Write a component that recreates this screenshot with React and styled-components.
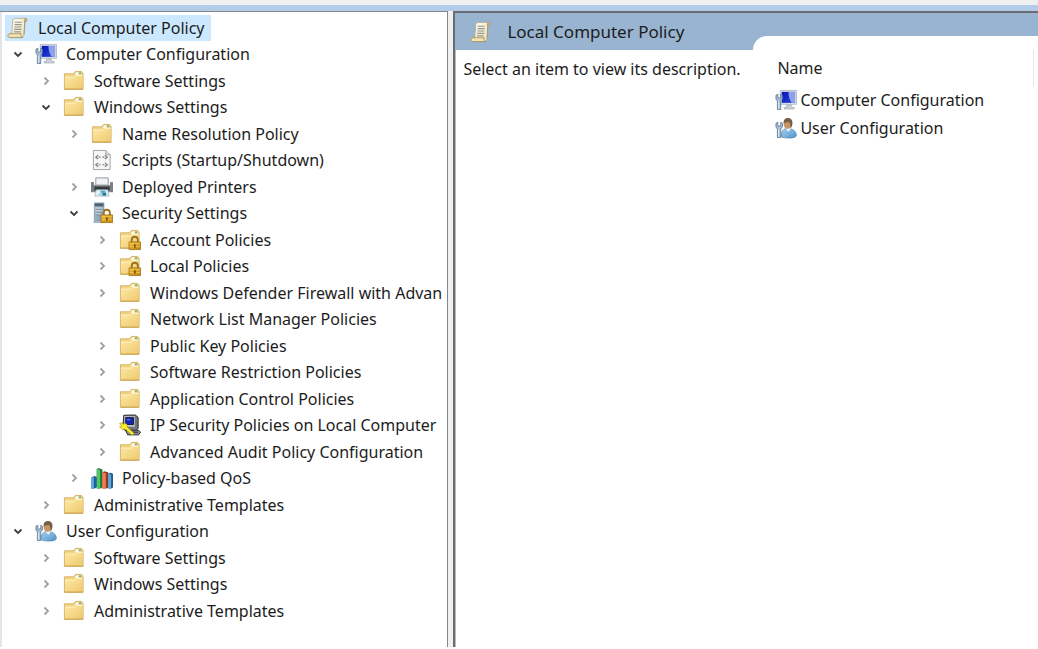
import React, { useState } from "react";
import styled, { createGlobalStyle } from "styled-components";

const GlobalStyle = createGlobalStyle`
  * {
    box-sizing: border-box;
  }

  body {
    margin: 0;
    background: #fff;
    color: #1c1c1c;
    font-family: "Noto Sans", "Open Sans", sans-serif;
    font-size: 16px;
  }

  button {
    font: inherit;
    color: inherit;
    background: none;
    border: 0;
    padding: 0;
    cursor: default;
  }
`;

const Window = styled.div`
  display: flex;
  flex-direction: column;
  height: 100vh;
  padding-bottom: 2px;
  overflow: hidden;
`;

const TopStrip = styled.div`
  flex: none;
  height: 11px;
  background: #b3cde8;
  border-top: 5px solid #f0f0f1;
`;

const Panes = styled.div`
  flex: 1;
  display: flex;
  min-height: 0;
  background: #f0f0f0;
`;

const TreePane = styled.nav`
  flex: 0 0 43.2%;
  overflow: hidden;
  background: #fff;
  border: solid #82878c;
  border-width: 1px 1px 0 0;
  box-shadow: inset 2px 0 0 #e3e5e8;
`;

const DetailPane = styled.main`
  flex: 1;
  min-width: 0;
  margin-left: 5px;
  background: #fff;
  border: solid #696d72;
  border-width: 2px 0 0 2px;
  box-shadow: inset 1px 0 0 #b8bbbf;
`;

const Tree = styled.ul`
  list-style: none;
  margin: 0;
  padding: 2px 0 0;
`;

const TreeRow = styled.li`
  display: flex;
  align-items: center;
  height: 26px;
  padding-left: ${({ $level }) => ($level ? 11 + 28 * ($level - 1) : 5)}px;

  &:nth-child(odd) {
    height: 27px;
  }
`;

const Twisty = styled.button`
  display: flex;
  flex: none;
  align-items: center;
  justify-content: center;
  width: 14px;
  height: 20px;
  margin-right: 8px;
  color: ${({ $open }) => ($open ? "#404040" : "#a0a0a0")};
`;

const TwistySpace = styled.span`
  flex: none;
  width: 22px;
`;

const TreeLabel = styled.button`
  display: flex;
  flex: none;
  align-items: center;
  gap: 9px;
  height: 26px;
  padding: 0 6px 0 2px;
  line-height: 26px;
  white-space: nowrap;
  background: ${({ $selected }) => ($selected ? "#cce8ff" : "none")};
`;

const Icon = styled.svg`
  display: block;
  flex: none;
  width: 22px;
  height: 22px;
`;

const ChevronIcon = styled.svg`
  display: block;
  width: 12px;
  height: 12px;
  fill: none;
  stroke: currentColor;
  stroke-width: 1.8;
`;

const TitleBar = styled.header`
  display: flex;
  align-items: center;
  gap: 15px;
  height: 37px;
  padding-left: 15px;
  background: #99b4d1;
`;

const Title = styled.h1`
  margin: 0;
  font-size: 17px;
  font-weight: 400;
`;

const DetailBody = styled.div`
  display: flex;
`;

const Description = styled.p`
  flex: 0 0 298px;
  margin: 0;
  padding: 7px 0 0 8px;
  line-height: 24px;
  white-space: nowrap;
`;

const Results = styled.div`
  flex: 1;
  margin-top: -14px;
  padding: 14px 4px 0 22px;
  background: #fff;
  border-top-left-radius: 14px;
`;

const ResultTable = styled.table`
  width: 100%;
  border-collapse: collapse;

  th {
    height: 36px;
    padding: 0 0 0 2px;
    font-weight: 400;
    text-align: left;
    border-right: 1px solid #e8e8e8;
  }

  td {
    height: 28px;
    padding: 0;
  }
`;

const ResultItem = styled.button`
  display: flex;
  align-items: center;
  gap: 3px;
`;

const Chevron = ({ open }) => (
  <ChevronIcon viewBox="0 0 12 12" aria-hidden="true">
    <path d={open ? "M2.5 4.5 6 8 9.5 4.5" : "M4.5 2.5 8 6 4.5 9.5"} />
  </ChevronIcon>
);

const FolderShape = () => (
  <>
    <path d="M1.500 19.500V3.500h9.500l2-2.500h6.500l1.500 2v16.500z" fill="#f2d686" stroke="#d0ab58" strokeWidth=".9" />
    <path d="M13.500 2h5.500v2.500h-6.500z" fill="#fffdf0" />
    <path d="M16.500 2H19v2h-2.500z" fill="#79a87c" />
    <path d="M2 7h10.500l1.500-1.800h6.500V19H2z" fill="url(#folderFace)" />
    <path d="M2 7h10.500l1.500-1.800h6.500" fill="none" stroke="#fff3c4" />
    <path d="M1.500 19.500h19.500" stroke="#c69c43" />
  </>
);

const LockShape = () => (
  <>
    <path d="M13.300 14v-3.200a3.200 3.200 0 0 1 6.400 0V14" fill="none" stroke="#9b7320" strokeWidth="1.900" />
    <path d="M10.500 13h12v8h-12z" fill="url(#lockFace)" stroke="#9a6b10" strokeWidth=".8" />
    <path d="M11 15h11M11 18h11" stroke="#f7cd5a" strokeWidth=".8" />
    <path d="M15.800 15.500h1.500v3.500h-1.500z" fill="#65450a" />
  </>
);

const WrenchShape = () => (
  <>
    <path d="M1 6v4l1.500 2v9H6v-9l1.700-2V6L6 5v4H3V5z" fill="#a7c0d6" stroke="#54718d" strokeWidth=".8" />
    <path d="M3.800 12.500V20" stroke="#e4f0fa" />
  </>
);

const drawings = {
  scroll: (
    <>
      <path d="M6 2.500 8 1h12.500L19 3l-1 14.500-1.500 3.500H2.500L1 19l1.500-2H5z" fill="url(#paper)" stroke="#b5a67d" strokeWidth=".8" />
      <path d="M18 3c0-1.300.700-2 1.500-2s1.500.800 1.500 1.800L20 4.500h-2z" fill="#cdb988" stroke="#958458" strokeWidth=".6" />
      <path d="M1 18.800c0-1 1-1.800 2-1.800h12c-.8.700-.6 3 1.500 4H3c-1.200 0-2-1-2-2.200z" fill="#f3e3b4" stroke="#9a8654" strokeWidth=".8" />
      <path d="M18.500 4.500 17.800 17.500" stroke="#a3946a" strokeWidth=".9" />
      <path d="M8 5h7.500M8 7.500h7.300M7.700 10H15M7.500 12.500H15M7.300 15h7" stroke="#98968d" strokeWidth="1.200" />
    </>
  ),
  computer: (
    <>
      <path d="M5.500 1h17v14.500h-17z" fill="#dde3ea" stroke="#a5afba" strokeWidth=".8" />
      <path d="M7 2.500h14v11.500H7z" fill="url(#screen)" />
      <path d="M14 2.500h7V14h-3.500c-2-2.500-3.500-6-3.500-11.500z" fill="#a9bdf2" opacity=".8" />
      <path d="M12 16h5v2.500h3v2H9.500v-2H12z" fill="#c8ced5" stroke="#9fa7af" strokeWidth=".6" />
      <WrenchShape />
    </>
  ),
  user: (
    <>
      <path d="M6.500 20c-.3-5 2-8.500 6.500-8.500 5 0 9.300 2.500 9.300 7 0 2-3.300 3-7.800 3-4.300 0-7-.3-8-1.500z" fill="url(#shirt)" stroke="#4d7ea8" strokeWidth=".7" />
      <path d="m11 11.500 3 3.500 3-4z" fill="#f4f8fb" />
      <ellipse cx="13" cy="7" rx="4" ry="4.800" fill="#c99562" />
      <path d="M9 6C8.700 2.500 10.700.6 13.700.6c3.200 0 5 2.400 4.500 6.400-.3 2-1 3.500-2.200 4.500.5-3 0-5.500-1.800-7C12.500 5.300 11 5.500 9 6z" fill="#75604c" />
      <WrenchShape />
    </>
  ),
  folder: <FolderShape />,
  lockedFolder: (
    <>
      <FolderShape />
      <LockShape />
    </>
  ),
  script: (
    <>
      <path d="M2.500 1h13l4.500 4.500V21H2.500z" fill="#f6f6f6" stroke="#a0a0a0" />
      <path d="M15.500 1v4.500H20" fill="#ddd" stroke="#a0a0a0" />
      <path d="M7.500 6 5 8l2.500 2M14.500 6 17 8l-2.500 2M7.500 14 5 16l2.500 2M14.500 14l2.500 2-2.500 2" fill="none" stroke="#777" strokeWidth="1.200" />
      <path d="M8 8h2m2 0h2M8 16h2m2 0h2" stroke="#777" strokeWidth="1.200" />
    </>
  ),
  printer: (
    <>
      <path d="M5 1.500h13V9H5z" fill="#f1f3f4" stroke="#8f979e" />
      <path d="M0 6h3v3h17V6h3v10.500H0z" fill="#8c9195" />
      <path d="M0 10h23v5H0z" fill="#5d6265" />
      <path d="M0 6h3v10H0zM20 6h3v10h-3z" fill="#797f83" />
      <path d="M4 11h15v3H4z" fill="#34393c" />
      <path d="M5.500 14h12l1.500 6.500H4z" fill="#e5f3f8" stroke="#93a6b0" strokeWidth=".7" />
      <path d="M10 15h5v2h-5z" fill="#43a5c7" />
      <path d="M8 17.500h4V20H8z" fill="#9fd4e4" />
      <path d="M12 17h4v3h-4z" fill="#2a7388" />
    </>
  ),
  server: (
    <>
      <path d="M3.500.5h10v20h-10z" fill="url(#tower)" stroke="#7d92a2" strokeWidth=".8" />
      <path d="M4 1h9v3H4z" fill="#4c6170" />
      <path d="M5 6h7M5 9h7M5 12h5" stroke="#eaf3f8" strokeWidth="1.200" />
      <path d="M5 7h7M5 10h7M5 13h5" stroke="#6e8595" />
      <path d="M2.500 19.500H11v2H2.500z" fill="#a9bac6" />
      <LockShape />
    </>
  ),
  ipsec: (
    <>
      <path d="M5 .8 17 .5l3 2.500v11.500l-2.500 2.500H6.500L4 14z" fill="#74787c" stroke="#26282a" />
      <path d="M5.500 1.800h11v11h-11z" fill="#c3c6c9" />
      <path d="M7 3.300h8.200v7.200H7z" fill="#1623b5" stroke="#171a42" />
      <path d="M8 5h4v1H8z" fill="#6b8bff" />
      <path d="M7 16.500h13.500l2 2-2 2.800H9z" fill="#8e9296" stroke="#26282a" />
      <path d="M12 18.500h8" stroke="#1e2022" />
      <path d="M.6 9.500 3 8.700l1.700 1.800L5.500 9l3 1.500V13l7.300 6.700-2 2-7.300-6.500-3 .6L.6 13l2.500-.8z" fill="#fbee2b" stroke="#a59816" strokeWidth=".7" />
    </>
  ),
  chart: (
    <>
      <path d="m0 11 3-2 4 1v10l-3 2H0z" fill="#1d5f9b" />
      <path d="m0 11 3-1v12H0z" fill="#63a9dd" />
      <path d="m6 1.500 2-1 4 1.500v19l-2 1H6z" fill="#237b39" />
      <path d="M6 1.500 9.500 2.500V22H6z" fill="#55c469" />
      <path d="m12 5 2-1 4 1v16l-2 1h-4z" fill="#8f3a27" />
      <path d="m12 5 3.500 1v16H12z" fill="#f07c50" />
      <path d="m18 6.500 2-1 3 1V21l-2 1h-3z" fill="#215c8e" />
      <path d="m18 6.500 3 1V22h-3z" fill="#5eaadb" />
    </>
  ),
};

const Glyph = ({ name }) => (
  <Icon viewBox="0 0 23 22" aria-hidden="true">
    {drawings[name]}
  </Icon>
);

// gradients shared by all the icons
const Defs = styled.svg`
  display: block;
  width: 0;
  height: 0;
`;

const Gradient = ({ id, from, to }) => (
  <linearGradient id={id} x1="0" y1="0" x2="1" y2="1">
    <stop offset="0" stopColor={from} />
    <stop offset="1" stopColor={to} />
  </linearGradient>
);

const IconGradients = () => (
  <Defs aria-hidden="true">
    <Gradient id="folderFace" from="#fde7a3" to="#efca70" />
    <Gradient id="lockFace" from="#f3bd35" to="#bd820f" />
    <Gradient id="paper" from="#fffdf3" to="#eae0c0" />
    <Gradient id="screen" from="#0714b8" to="#2b46dc" />
    <Gradient id="shirt" from="#a9d3f2" to="#4f92c8" />
    <Gradient id="tower" from="#b7c8d4" to="#7894a8" />
  </Defs>
);

const nodes = [
  { level: 0, icon: "scroll", label: "Local Computer Policy" },
  { level: 1, icon: "computer", label: "Computer Configuration", open: true },
  { level: 2, icon: "folder", label: "Software Settings", open: false },
  { level: 2, icon: "folder", label: "Windows Settings", open: true },
  { level: 3, icon: "folder", label: "Name Resolution Policy", open: false },
  { level: 3, icon: "script", label: "Scripts (Startup/Shutdown)" },
  { level: 3, icon: "printer", label: "Deployed Printers", open: false },
  { level: 3, icon: "server", label: "Security Settings", open: true },
  { level: 4, icon: "lockedFolder", label: "Account Policies", open: false },
  { level: 4, icon: "lockedFolder", label: "Local Policies", open: false },
  { level: 4, icon: "folder", label: "Windows Defender Firewall with Advan", open: false },
  { level: 4, icon: "folder", label: "Network List Manager Policies" },
  { level: 4, icon: "folder", label: "Public Key Policies", open: false },
  { level: 4, icon: "folder", label: "Software Restriction Policies", open: false },
  { level: 4, icon: "folder", label: "Application Control Policies", open: false },
  { level: 4, icon: "ipsec", label: "IP Security Policies on Local Computer", open: false },
  { level: 4, icon: "folder", label: "Advanced Audit Policy Configuration", open: false },
  { level: 3, icon: "chart", label: "Policy-based QoS", open: false },
  { level: 2, icon: "folder", label: "Administrative Templates", open: false },
  { level: 1, icon: "user", label: "User Configuration", open: true },
  { level: 2, icon: "folder", label: "Software Settings", open: false },
  { level: 2, icon: "folder", label: "Windows Settings", open: false },
  { level: 2, icon: "folder", label: "Administrative Templates", open: false },
];

const results = [
  { icon: "computer", label: "Computer Configuration" },
  { icon: "user", label: "User Configuration" },
];

const App = () => {
  const [selected, setSelected] = useState(0);

  return (
    <Window>
      <GlobalStyle />
      <IconGradients />
      <TopStrip />
      <Panes>
        <TreePane>
          <Tree>
            {nodes.map((node, index) => (
              <TreeRow key={index} $level={node.level}>
                {node.open !== undefined && (
                  <Twisty $open={node.open} aria-expanded={node.open} aria-label={node.label}>
                    <Chevron open={node.open} />
                  </Twisty>
                )}
                {node.level > 0 && node.open === undefined && <TwistySpace />}
                <TreeLabel $selected={selected === index} onClick={() => setSelected(index)}>
                  <Glyph name={node.icon} />
                  {node.label}
                </TreeLabel>
              </TreeRow>
            ))}
          </Tree>
        </TreePane>
        <DetailPane>
          <TitleBar>
            <Glyph name="scroll" />
            <Title>Local Computer Policy</Title>
          </TitleBar>
          <DetailBody>
            <Description>Select an item to view its description.</Description>
            <Results>
              <ResultTable>
                <thead>
                  <tr>
                    <th scope="col">Name</th>
                  </tr>
                </thead>
                <tbody>
                  {results.map((item) => (
                    <tr key={item.label}>
                      <td>
                        <ResultItem>
                          <Glyph name={item.icon} />
                          {item.label}
                        </ResultItem>
                      </td>
                    </tr>
                  ))}
                </tbody>
              </ResultTable>
            </Results>
          </DetailBody>
        </DetailPane>
      </Panes>
    </Window>
  );
};

export default App;
